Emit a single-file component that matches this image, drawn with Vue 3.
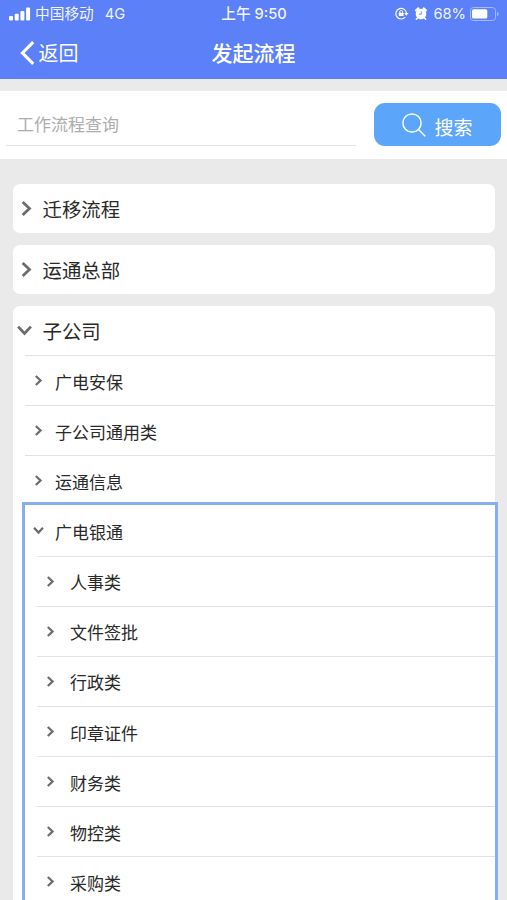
<script setup>
const cards = [
  { name: '迁移流程' },
  { name: '运通总部' },
  {
    name: '子公司',
    children: [
      { name: '广电安保' },
      { name: '子公司通用类' },
      { name: '运通信息' },
      {
        name: '广电银通',
        children: ['人事类', '文件签批', '行政类', '印章证件', '财务类', '物控类', '采购类'],
      },
    ],
  },
]
</script>

<template>
  <div class="page">
    <header class="header">
      <div class="status">
        <div class="carrier">
          <svg class="signal" width="22" height="14" viewBox="0 0 22 14" fill="#fff">
            <rect x="0" y="9" width="4" height="4.5" rx="1" />
            <rect x="5.7" y="6.7" width="4" height="6.8" rx="1" />
            <rect x="11.4" y="4" width="4" height="9.5" rx="1" />
            <rect x="17.1" y="0.5" width="4" height="13" rx="1" />
          </svg>
          <span>中国移动</span>
          <span class="network">4G</span>
        </div>
        <span class="time">上午 9:50</span>
        <div class="indicators">
          <svg class="lock" width="14" height="13" viewBox="0 0 14 13" fill="none" stroke="#fff">
            <path d="M10.2 10.2A5.3 5.3 0 1 1 11.5 6.5" stroke-width="1.2" />
            <path d="M9.3 6h4.2l-2.1 2.8z" fill="#fff" stroke="none" />
            <rect x="3.8" y="5.8" width="4.8" height="3.3" rx=".5" fill="#fff" stroke="none" />
            <path d="M4.8 6V4.8a1.4 1.4 0 0 1 2.8 0V6" stroke-width=".9" />
          </svg>
          <svg class="alarm" width="12" height="13" viewBox="0 0 12 13">
            <circle cx="6" cy="7" r="5.3" fill="#fff" />
            <path d="M1.2 3.4 3.4 1.4M10.8 3.4 8.6 1.4" stroke="#fff" stroke-width="2.2" stroke-linecap="round" />
            <path d="M2.4 11 1.3 12.2M9.6 11l1.1 1.2" stroke="#fff" stroke-width="1.4" stroke-linecap="round" />
            <path d="M6.3 4.4V7.2H4" fill="none" stroke="#5b80f7" stroke-width=".9" />
          </svg>
          <span class="percent">68%</span>
          <svg class="battery" width="29" height="14" viewBox="0 0 29 14">
            <rect x=".5" y=".5" width="25" height="13" rx="3" fill="none" stroke="#a4b9fb" />
            <rect x="2" y="2.3" width="15.3" height="9.2" rx="1.5" fill="#fff" />
            <path d="M27 4.7q1.6.6 1.6 2.3T27 9.3z" fill="#a4b9fb" />
          </svg>
        </div>
      </div>
      <div class="nav">
        <div class="back">
          <svg width="15" height="24" viewBox="0 0 15 24" fill="none" stroke="#fff" stroke-width="3.1">
            <path d="M13.2 1.2 2.5 12l10.7 10.8" />
          </svg>
          <span>返回</span>
        </div>
        <h1 class="title">发起流程</h1>
      </div>
    </header>

    <section class="search">
      <div class="field">工作流程查询</div>
      <button class="button">
        <svg width="24" height="24" viewBox="0 0 24 24" fill="none" stroke="#fff" stroke-width="1.5">
          <circle cx="10" cy="10" r="9.1" />
          <path d="m16.5 16.5 6.7 6.7" />
        </svg>
        <span>搜索</span>
      </button>
    </section>

    <main class="list">
      <section v-for="card in cards" :key="card.name" class="card">
        <div class="row top-row">
          <svg class="chevron" :class="{ open: card.children }" viewBox="0 0 14 14">
            <path d="m3.4 1 6.4 6-6.4 6" />
          </svg>
          <span>{{ card.name }}</span>
        </div>
        <div v-if="card.children" class="children">
          <div v-for="child in card.children" :key="child.name" class="node" :class="{ focused: child.children }">
            <div class="row sub-row">
              <svg class="chevron" :class="{ open: child.children }" viewBox="0 0 14 14">
                <path d="m3.6 1.3 6 5.7-6 5.7" />
              </svg>
              <span>{{ child.name }}</span>
            </div>
            <div v-if="child.children" class="leaves">
              <div v-for="leaf in child.children" :key="leaf" class="row sub-row leaf">
                <svg class="chevron" viewBox="0 0 14 14">
                  <path d="m3.6 1.3 6 5.7-6 5.7" />
                </svg>
                <span>{{ leaf }}</span>
              </div>
            </div>
          </div>
        </div>
      </section>
    </main>
  </div>
</template>

<style>
body {
  margin: 0;
  overflow: hidden;
}
</style>

<style scoped>
.page {
  height: 900px;
  overflow: hidden;
  background: #eaeaea;
  color: #292929;
  font-family: "Noto Sans CJK SC", sans-serif;
}
svg {
  display: block;
  flex: none;
}
span {
  white-space: nowrap;
}
.header {
  height: 79px;
  background: #5b80f7;
  color: #fff;
}
.status {
  display: grid;
  grid-template-columns: 1fr auto 1fr;
  align-items: center;
  height: 27px;
  padding: 0 8px 0 9px;
  font-family: Inter, "Noto Sans CJK SC", sans-serif;
  font-size: 14.7px;
  line-height: 27px;
  color: #f0f4ff;
}
.status span {
  padding-top: 2px;
  line-height: 25px;
}
.carrier,
.indicators {
  display: flex;
  align-items: center;
}
.signal {
  margin-right: 4px;
}
.network {
  margin-left: 11px;
}
.time {
  font-weight: 500;
}
.indicators {
  justify-content: flex-end;
}
.lock {
  margin-right: 6px;
}
.alarm {
  margin-right: 6px;
}
.battery {
  margin-left: 4px;
}
.nav {
  display: grid;
  grid-template-columns: 1fr auto 1fr;
  align-items: center;
  height: 52px;
}
.back {
  display: flex;
  align-items: center;
  gap: 3.5px;
  padding-left: 20px;
  font-size: 20px;
  line-height: 30px;
}
.title {
  margin: 0;
  padding-bottom: 2px;
  font-size: 21px;
  font-weight: 500;
  line-height: 30px;
}
.search {
  display: flex;
  align-items: flex-start;
  justify-content: space-between;
  box-sizing: border-box;
  height: 68px;
  margin-top: 12px;
  padding: 12px 6px 0;
  background: #fff;
}
.field {
  box-sizing: border-box;
  width: 350px;
  height: 43px;
  padding-left: 11px;
  border-bottom: 1px solid #e5e5e5;
  color: #adadad;
  font-size: 17px;
  line-height: 41px;
}
.button {
  display: flex;
  align-items: center;
  justify-content: center;
  gap: 8px;
  width: 127px;
  height: 43px;
  padding: 1px 0 0;
  border: 0;
  border-radius: 11px;
  background: #5ba5fb;
  color: #fff;
  font-family: inherit;
  font-size: 19px;
}
.button span {
  padding-top: 2px;
}
.list {
  display: flex;
  flex-direction: column;
  gap: 12px;
  padding: 25px 12px 0 13px;
}
.card {
  border-radius: 7px;
  background: #fff;
}
.row {
  display: flex;
  align-items: center;
}
.top-row {
  height: 49px;
  gap: 8.5px;
  padding-left: 6px;
  font-size: 19.4px;
  line-height: 49px;
}
.chevron {
  width: 15px;
  height: 15px;
  fill: none;
  stroke: #6c6c6c;
  stroke-width: 2.6;
}
.open {
  transform: rotate(90deg);
}
.top-row .open {
  margin: 0 2px 0 -2px;
}
.children {
  padding-left: 12px;
}
.sub-row {
  box-sizing: border-box;
  height: 50.15px;
  gap: 11px;
  padding-left: 8px;
  border-top: 1px solid #e2e2e2;
  font-size: 17px;
  line-height: 50px;
}
.sub-row span {
  padding-top: 2px;
  line-height: 48px;
}
.sub-row .chevron {
  width: 11px;
  height: 11px;
  stroke-width: 2.9;
}
.focused {
  outline: 3px solid #87aff0;
  outline-offset: -0.5px;
}
.focused > .row {
  border-top-color: transparent;
}
.leaves {
  padding-left: 12px;
}
.leaf {
  gap: 14px;
}
</style>
